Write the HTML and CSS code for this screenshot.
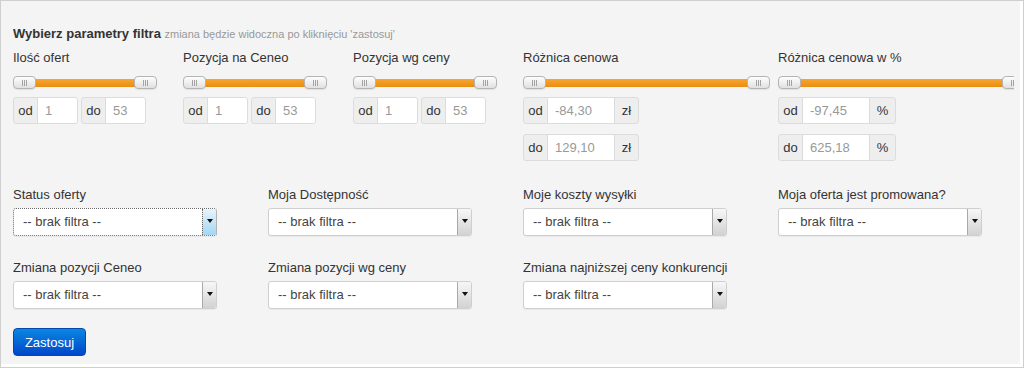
FILE: index.html
```html
<!DOCTYPE html>
<html>
	<head>
		<meta charset="utf-8" />
		<title>Filtr ofert</title>
		<link rel="stylesheet" href="styles.css">
	</head>
	<body>
		<div class="frame">
			<div class="panel">
				<div class="inner">
					<h3 class="title">Wybierz parametry filtra <small>zmiana będzie widoczna po kliknięciu 'zastosuj'</small></h3>

					<div class="row row-sliders">
						<div class="field span2">
							<label>Ilość ofert</label>
							<div class="slider"><span class="handle"></span><span class="handle"></span></div>
							<div class="ranges">
								<div class="group"><span class="addon">od</span><input type="text" value="1"></div>
								<div class="group"><span class="addon">do</span><input type="text" value="53"></div>
							</div>
						</div>
						<div class="field span2">
							<label>Pozycja na Ceneo</label>
							<div class="slider"><span class="handle"></span><span class="handle"></span></div>
							<div class="ranges">
								<div class="group"><span class="addon">od</span><input type="text" value="1"></div>
								<div class="group"><span class="addon">do</span><input type="text" value="53"></div>
							</div>
						</div>
						<div class="field span2">
							<label>Pozycja wg ceny</label>
							<div class="slider"><span class="handle"></span><span class="handle"></span></div>
							<div class="ranges">
								<div class="group"><span class="addon">od</span><input type="text" value="1"></div>
								<div class="group"><span class="addon">do</span><input type="text" value="53"></div>
							</div>
						</div>
						<div class="field span3">
							<label>Różnica cenowa</label>
							<div class="slider"><span class="handle"></span><span class="handle"></span></div>
							<div class="ranges stacked">
								<div class="group"><span class="addon">od</span><input class="wide" type="text" value="-84,30"><span class="addon suffix">zł</span></div>
								<div class="group"><span class="addon">do</span><input class="wide" type="text" value="129,10"><span class="addon suffix">zł</span></div>
							</div>
						</div>
						<div class="field span3">
							<label>Różnica cenowa w %</label>
							<div class="slider"><span class="handle"></span><span class="handle"></span></div>
							<div class="ranges stacked">
								<div class="group"><span class="addon">od</span><input class="wide" type="text" value="-97,45"><span class="addon suffix pct">%</span></div>
								<div class="group"><span class="addon">do</span><input class="wide" type="text" value="625,18"><span class="addon suffix pct">%</span></div>
							</div>
						</div>
					</div>

					<div class="row row-selects">
						<div class="field span3">
							<label>Status oferty</label>
							<div class="select focus"><span class="text">-- brak filtra --</span><span class="arrow"></span></div>
						</div>
						<div class="field span3">
							<label>Moja Dostępność</label>
							<div class="select"><span class="text">-- brak filtra --</span><span class="arrow"></span></div>
						</div>
						<div class="field span3">
							<label>Moje koszty wysyłki</label>
							<div class="select"><span class="text">-- brak filtra --</span><span class="arrow"></span></div>
						</div>
						<div class="field span3">
							<label>Moja oferta jest promowana?</label>
							<div class="select"><span class="text">-- brak filtra --</span><span class="arrow"></span></div>
						</div>
					</div>

					<div class="row row-selects second">
						<div class="field span3">
							<label>Zmiana pozycji Ceneo</label>
							<div class="select"><span class="text">-- brak filtra --</span><span class="arrow"></span></div>
						</div>
						<div class="field span3">
							<label>Zmiana pozycji wg ceny</label>
							<div class="select"><span class="text">-- brak filtra --</span><span class="arrow"></span></div>
						</div>
						<div class="field span3">
							<label>Zmiana najniższej ceny konkurencji</label>
							<div class="select"><span class="text">-- brak filtra --</span><span class="arrow"></span></div>
						</div>
					</div>

					<button class="btn" type="button">Zastosuj</button>
				</div>
			</div>
		</div>
	</body>
</html>
```

FILE: styles.css
```css
body {
	margin: 0;
	padding: 0;
	font-family: "Liberation Sans", Arial, sans-serif;
	font-size: 13px;
	line-height: 18px;
	color: #333;
	background-color: #fff;
}
.frame {
	width: 1024px;
	height: 368px;
	box-sizing: border-box;
	border: 1px solid #cfcfcf;
	background-color: #fff;
}
.panel {
	height: 363px;
	box-sizing: border-box;
	margin-right: 3px;
	padding: 24px 6px 0 12px;
	background-color: #f4f4f4;
}
.inner {
	overflow: hidden;
}
.title {
	margin: 0;
	font-size: 13px;
	font-weight: bold;
	line-height: 18px;
}
.title small {
	font-size: 11px;
	font-weight: normal;
	color: #999;
}
.row {
	display: flex;
	align-items: flex-start;
}
.row-sliders {
	margin-top: 6px;
}
.row-selects {
	margin-top: 25px;
}
.row-selects.second {
	margin-top: 23px;
}
.field {
	flex: none;
}
.field label {
	display: block;
	line-height: 18px;
}
.span2 {
	width: 144px;
	margin-right: 26px;
}
.span3 {
	width: 229px;
	margin-right: 26px;
}

/* slider */
.slider {
	margin-top: 9px;
	width: 144px;
	height: 13px;
	display: flex;
	justify-content: space-between;
	background: linear-gradient(#f6a531, #ec8d12) no-repeat center / calc(100% - 20px) 8px;
}
.span3 .slider {
	width: 247px;
}
.handle {
	width: 21px;
	height: 11px;
	border: 1px solid #b4b4b4;
	border-radius: 4px;
	background: linear-gradient(#fdfdfd, #e1e1e1);
	box-shadow: 0 1px 1px rgba(0,0,0,0.08);
	display: flex;
	align-items: center;
	justify-content: center;
}
.handle::before {
	content: "";
	width: 5px;
	height: 6px;
	background: repeating-linear-gradient(90deg, #a3a3a3 0 1px, transparent 1px 2px);
}

/* od / do */
.ranges {
	margin-top: 8px;
	display: flex;
	gap: 3px;
}
.ranges.stacked {
	flex-direction: column;
	align-items: flex-start;
	gap: 10px;
}
.group {
	display: flex;
	height: 27px;
	box-sizing: border-box;
	border: 1px solid #dcdcdc;
	border-radius: 3px;
	background-color: #eee;
	overflow: hidden;
}
.addon {
	width: 23px;
	text-align: center;
	line-height: 25px;
	color: #333;
}
.addon.suffix {
	width: 24px;
	border-left: 1px solid #dcdcdc;
	box-sizing: border-box;
}
.addon.pct {
	width: 26px;
}
.group input {
	width: 40px;
	height: 25px;
	box-sizing: border-box;
	margin: 0;
	padding: 0 7px;
	border: 0;
	border-left: 1px solid #dcdcdc;
	font-family: inherit;
	font-size: 13px;
	color: #999;
	background-color: #fff;
	outline: none;
}
.group input.wide {
	width: 67px;
}

/* select */
.select {
	margin-top: 4px;
	width: 204px;
	height: 28px;
	box-sizing: border-box;
	display: flex;
	border: 1px solid #cfcfcf;
	border-radius: 3px;
	background-color: #fff;
	box-shadow: 0 1px 1px rgba(0,0,0,0.05);
}
.select .text {
	flex: 1;
	padding-left: 9px;
	line-height: 25px;
	color: #444;
}
.select .arrow {
	width: 14px;
	border-left: 1px solid #a9a9a9;
	border-radius: 0 2px 2px 0;
	background: linear-gradient(#f7f7f7, #d2d2d2);
	display: flex;
	align-items: center;
	justify-content: center;
	padding-bottom: 3px;
	box-sizing: border-box;
}
.select .arrow::before {
	content: "";
	border-left: 3px solid transparent;
	border-right: 3px solid transparent;
	border-top: 4px solid #111;
}
.select.focus {
	border: 1px dotted #6a6a6a;
}
.select.focus .arrow {
	border-left: 1px dotted #6a6a6a;
	background: linear-gradient(#e6f5fd, #a4d6f3);
}

/* button */
.btn {
	display: block;
	margin-top: 19px;
	width: 73px;
	height: 28px;
	padding: 0;
	border: 1px solid #0447b0;
	border-radius: 4px;
	background: linear-gradient(#0b86e2, #0047c9);
	color: #fff;
	font-family: inherit;
	font-size: 13px;
	cursor: pointer;
}
```
